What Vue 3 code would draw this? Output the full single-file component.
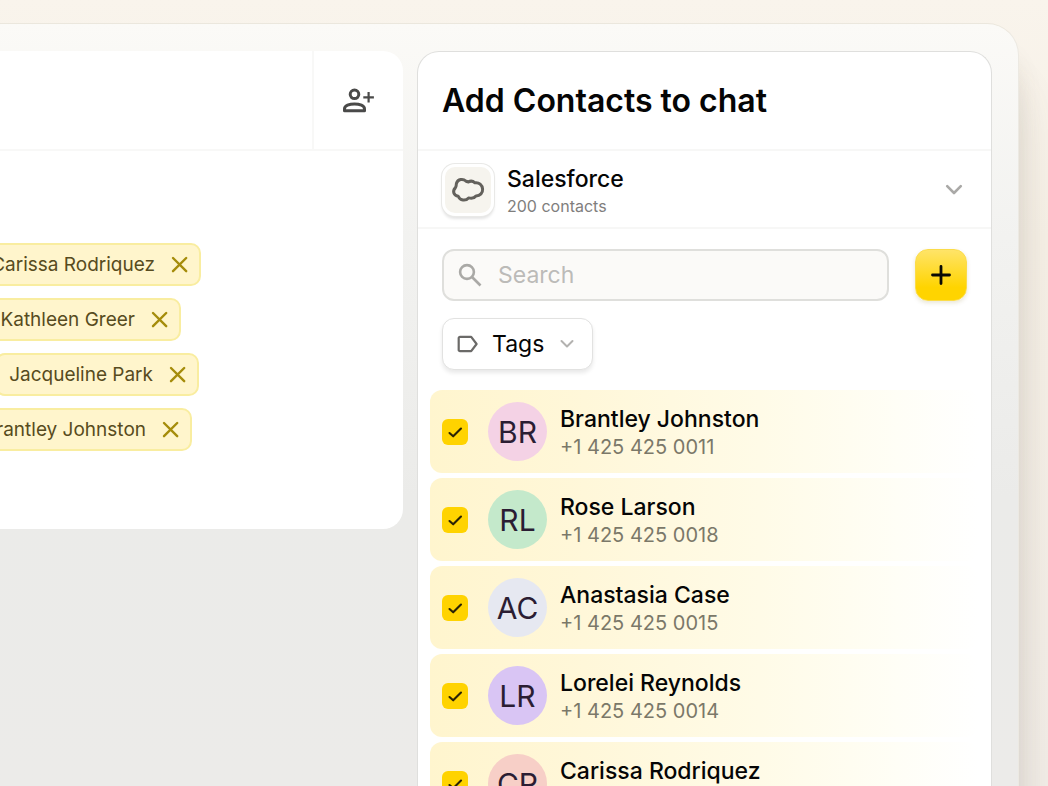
<script setup>
import { ref } from 'vue'

const recipients = [
  { name: 'Carissa Rodriquez', inset: 202 },
  { name: 'Kathleen Greer', inset: 222 },
  { name: 'Jacqueline Park', inset: 204 },
  { name: 'Brantley Johnston', inset: 211 }
]

const contacts = ref([
  { initials: 'BR', name: 'Brantley Johnston', phone: '+1 425 425 0011', tone: 'pink', picked: true },
  { initials: 'RL', name: 'Rose Larson', phone: '+1 425 425 0018', tone: 'green', picked: true },
  { initials: 'AC', name: 'Anastasia Case', phone: '+1 425 425 0015', tone: 'slate', picked: true },
  { initials: 'LR', name: 'Lorelei Reynolds', phone: '+1 425 425 0014', tone: 'violet', picked: true },
  { initials: 'CR', name: 'Carissa Rodriquez', phone: '', tone: 'peach', picked: true }
])

const query = ref('')
</script>

<template>
  <div class="stage">
    <div class="frame">
      <section class="chat">
        <header class="chat-head">
          <div class="chat-title"></div>
          <button class="invite" type="button" aria-label="Add people">
            <svg width="34" height="28" viewBox="0 0 34 28" fill="none" stroke="#4a4a49" stroke-width="3">
              <circle cx="12.500" cy="8.300" r="4.300" />
              <path d="M2.500 24.800v-1.900c0-3.200 4.800-5 10-5s10 1.800 10 5v1.900z" stroke-linejoin="round" />
              <path d="M26.600 6v10.600M21.300 11.300h10.600" stroke-width="2.200" />
            </svg>
          </button>
        </header>
        <ul class="recipients">
          <li v-for="r in recipients" :key="r.name" :style="{ paddingRight: r.inset + 'px' }">
            <span class="chip">
              {{ r.name }}
              <button type="button" :aria-label="'Remove ' + r.name">
                <svg width="18" height="18" viewBox="0 0 18 18" fill="none" stroke="#a58c0b" stroke-width="2.400" stroke-linecap="round">
                  <path d="M2 2l13.200 13.200M15.200 2L2 15.200" />
                </svg>
              </button>
            </span>
          </li>
        </ul>
      </section>

      <aside class="panel">
        <h1>Add Contacts to chat</h1>
        <button class="source" type="button" aria-haspopup="listbox">
          <span class="source-logo">
            <svg width="34" height="26" viewBox="0 0 34 26" fill="none" stroke="#63615c" stroke-width="3" stroke-linejoin="round">
              <path d="M14.800 4C12.200 1.500 6.800 1.900 5.500 6.300C5 8 5.500 9.300 4.300 10.900C1.200 14.200 2.600 18.600 7.200 19.200C9 23.600 14.600 24.200 17.600 20.900C20.300 21.600 23.400 21 25 19C29.200 18.800 31.900 15.900 31.600 12.200C31.300 7.800 28 5.200 24 5.800C22 4 19.300 3.800 17.400 4.900C16.500 4.800 15.500 4.600 14.800 4Z" />
            </svg>
          </span>
          <span class="source-text">
            <span class="source-name">Salesforce</span>
            <span class="source-count">200 contacts</span>
          </span>
          <svg width="18" height="12" viewBox="0 0 18 12" fill="none" stroke="#aaa9a7" stroke-width="2.600" stroke-linecap="round" stroke-linejoin="round">
            <path d="M2.200 2.200l6.800 6.800 6.800-6.800" />
          </svg>
        </button>

        <div class="tools">
          <label class="search">
            <svg width="24" height="24" viewBox="0 0 24 24" fill="none" stroke="#aaa9a6" stroke-width="2.600">
              <circle cx="9" cy="9" r="6.900" />
              <path d="M14 14l8.500 8.500" />
            </svg>
            <input v-model="query" type="text" placeholder="Search" aria-label="Search" />
          </label>
          <button class="add" type="button" aria-label="Add contact">
            <svg width="20" height="20" viewBox="0 0 20 20" fill="none" stroke="#0a0a05" stroke-width="2.800" stroke-linecap="round">
              <path d="M10 1.500v17M1.500 10h17" />
            </svg>
          </button>
        </div>

        <button class="tags" type="button" aria-haspopup="listbox">
          <svg width="22" height="18" viewBox="0 0 22 18" fill="none" stroke="#6b6a68" stroke-width="2.200" stroke-linejoin="round">
            <path d="M3 1.800h11.200L19.600 9l-5.400 7.200H3a1.300 1.300 0 0 1-1.300-1.300V3.100A1.300 1.300 0 0 1 3 1.800z" />
          </svg>
          <span>Tags</span>
          <svg width="14" height="10" viewBox="0 0 14 10" fill="none" stroke="#b3b2b0" stroke-width="2" stroke-linecap="round" stroke-linejoin="round">
            <path d="M1.500 2l5.500 5.500L12.500 2" />
          </svg>
        </button>

        <ul class="contacts">
          <li v-for="c in contacts" :key="c.name">
            <label class="contact">
              <span class="tick">
                <input v-model="c.picked" type="checkbox" />
                <svg v-if="c.picked" width="26" height="26" viewBox="0 0 26 26" fill="none" stroke="#2a2305" stroke-width="2.100" stroke-linecap="round" stroke-linejoin="round">
                  <path d="M7.500 14l3.700 3.300 7.800-7.800" />
                </svg>
              </span>
              <span class="avatar" :class="c.tone">{{ c.initials }}</span>
              <span class="who">
                <span class="name">{{ c.name }}</span>
                <span class="phone">{{ c.phone }}</span>
              </span>
            </label>
          </li>
        </ul>
      </aside>
    </div>
  </div>
</template>

<style>
body {
  margin: 0;
  overflow: hidden;
}
</style>

<style scoped>
.stage,
.stage * {
  box-sizing: border-box;
}
.stage {
  height: 100vh;
  display: flex;
  padding: 23px 29px 0 0;
  overflow: hidden;
  background: linear-gradient(180deg, #f9f4ec 0%, #f5efe5 30%, #f1ece6 100%);
  font-family: Inter, "Liberation Sans", sans-serif;
  color: #050505;
}
.stage button {
  font: inherit;
  color: inherit;
  cursor: pointer;
}
.stage ul {
  list-style: none;
  margin: 0;
  padding: 0;
}
svg {
  display: block;
  flex: none;
}
.frame {
  flex: 1;
  min-width: 0;
  display: flex;
  align-items: flex-start;
  gap: 14px;
  padding: 27px 26px 0 0;
  border-top: 1px solid #ebe7dd;
  border-right: 1px solid #ece9e2;
  border-radius: 0 32px 0 0;
  background: linear-gradient(180deg, #fbfaf7 0%, #f2f2f0 28%, #ebebe9 62%, #ecebe9 100%);
  box-shadow: 0 60px 44px rgba(100, 92, 75, 0.14), 0 30px 24px rgba(100, 92, 75, 0.1);
}

/* conversation */
.chat {
  flex: 1;
  min-width: 0;
  overflow: hidden;
  padding-bottom: 78px;
  border-radius: 0 20px 20px 0;
  background: #fff;
}
.chat-head {
  display: flex;
  height: 100px;
  border-bottom: 2px solid #f8f8f7;
}
.chat-title {
  flex: 1;
}
.invite {
  display: flex;
  align-items: center;
  justify-content: center;
  width: 91px;
  padding: 0;
  border: 0;
  border-left: 2px solid #f8f8f7;
  background: none;
}
.stage .recipients {
  display: grid;
  grid-template-columns: minmax(0, 1fr);
  gap: 12px;
  padding-top: 92px;
}
.recipients li {
  display: flex;
  justify-content: flex-end;
}
.chip {
  display: flex;
  flex: none;
  align-items: center;
  gap: 16px;
  height: 43px;
  padding: 0 10px 0 12px;
  border: 2px solid #f9eda0;
  border-radius: 10px;
  background: #fff5cc;
  color: #574b20;
  font-size: 19px;
  line-height: 24px;
  white-space: nowrap;
}
.chip button {
  padding: 0;
  border: 0;
  background: none;
}

/* contact picker */
.panel {
  flex: 0 0 575px;
  height: calc(100vh - 51px);
  overflow: hidden;
  border: 1px solid #dfdfdd;
  border-bottom: 0;
  border-radius: 22px 22px 0 0;
  background: #fff;
}
h1 {
  margin: 0;
  padding: 29px 24px 28px;
  border-bottom: 2px solid #f7f7f6;
  font-size: 32px;
  font-weight: 600;
  line-height: 40px;
}
.source {
  display: flex;
  align-items: center;
  width: 100%;
  height: 78px;
  padding: 2px 28px 0 24px;
  border: 0;
  border-bottom: 2px solid #f7f7f6;
  background: none;
  text-align: left;
}
.source-logo {
  display: flex;
  align-items: center;
  justify-content: center;
  width: 52px;
  height: 52px;
  border: 3px solid #fff;
  border-radius: 13px;
  background: #f6f4ee;
  box-shadow: 0 0 0 1px #e9e9e7, 0 3px 3px rgba(0, 0, 0, 0.11);
}
.source-text {
  display: grid;
  flex: 1;
  margin-left: 13px;
  padding-top: 2px;
}
.source-name {
  font-size: 23px;
  font-weight: 500;
  line-height: 30px;
}
.source-count {
  font-size: 16px;
  line-height: 24px;
  color: #7f7e7d;
}
.tools {
  display: flex;
  gap: 26px;
  padding: 20px 24px 0;
}
.search {
  display: flex;
  flex: 1;
  align-items: center;
  gap: 16px;
  height: 52px;
  padding: 0 14px;
  border: 2px solid #dfdfdc;
  border-radius: 12px;
  background: #fbfaf8;
}
.search input {
  flex: 1;
  min-width: 0;
  padding: 0;
  border: 0;
  outline: 0;
  background: none;
  font: inherit;
  font-size: 23px;
  line-height: 30px;
}
.search input::placeholder {
  color: #bcbbb8;
  opacity: 1;
}
.add {
  display: flex;
  align-items: center;
  justify-content: center;
  width: 52px;
  height: 52px;
  padding: 0;
  border: 1px solid #fbdc4a;
  border-radius: 13px;
  background: linear-gradient(180deg, #ffe468 0%, #ffd400 75%);
  box-shadow: 0 2px 4px rgba(120, 100, 0, 0.16);
}
.tags {
  display: flex;
  align-items: center;
  width: 151px;
  height: 52px;
  margin: 17px 24px 0;
  padding: 0 14px;
  border: 1px solid #e2e2e1;
  border-radius: 12px;
  background: #fff;
  box-shadow: 0 3px 4px rgba(0, 0, 0, 0.09);
}
.tags span {
  margin: 0 16px 0 13px;
  font-size: 23px;
  line-height: 30px;
}
.stage .contacts {
  display: grid;
  gap: 5px;
  padding: 20px 12px 0;
}
.contact {
  display: flex;
  align-items: center;
  height: 83px;
  padding: 0 12px;
  border-radius: 12px;
  background: linear-gradient(90deg, #fff5ce 0%, #fff7d9 28%, #fffbe7 60%, #fffef6 85%, #fff 100%);
}
.tick {
  position: relative;
  width: 26px;
  height: 26px;
}
.tick input {
  display: block;
  width: 26px;
  height: 26px;
  margin: 0;
  border-radius: 6px;
  appearance: none;
  background: #fff;
}
.tick input:checked {
  background: #ffd300;
}
.tick svg {
  position: absolute;
  inset: 0;
  pointer-events: none;
}
.avatar {
  display: flex;
  align-items: center;
  justify-content: center;
  width: 59px;
  height: 59px;
  margin: 0 13px 0 20px;
  border-radius: 50%;
  color: #2b1d33;
  font-size: 30px;
  line-height: 36px;
}
.pink { background: #f4d2e5; }
.green { background: #c4e9cb; }
.slate { background: #e6e8f1; }
.violet { background: #d9c5f4; }
.peach { background: #f7cfc7; }
.who {
  display: grid;
}
.name {
  font-size: 23px;
  font-weight: 500;
  line-height: 30px;
}
.phone {
  min-height: 26px;
  font-size: 20px;
  line-height: 26px;
  color: #7b7869;
}
</style>
